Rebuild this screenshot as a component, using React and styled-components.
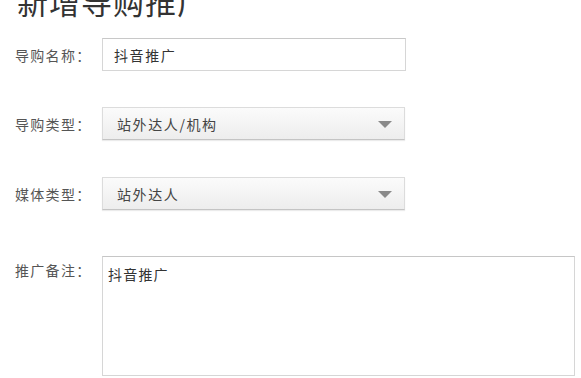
import React from "react";
import styled, { createGlobalStyle } from "styled-components";

const Global = createGlobalStyle`
  html, body { margin: 0; padding: 0; background: #fff; overflow: hidden; }
  body { font-family: "Noto Sans CJK SC", "Noto Sans", sans-serif; }
`;

const Page = styled.div`
  width: 581px;
  height: 378px;
  overflow: hidden;
  padding: 0 0 0 15px;
  box-sizing: border-box;
`;

const Title = styled.h1`
  margin: -14px 0 22px 2px;
  font-size: 31px;
  line-height: 30px;
  font-weight: 400;
  color: #333;
  letter-spacing: 1px;
`;

const Row = styled.div`
  display: flex;
  align-items: ${(p) => (p.$top ? "flex-start" : "center")};
  margin-bottom: ${(p) => p.$mb || 0}px;
`;

const Label = styled.label`
  width: 87px;
  flex: none;
  font-size: 14px;
  letter-spacing: 1.3px;
  color: #555;
  padding-top: ${(p) => (p.$top ? 4 : 0)}px;
`;

const Input = styled.div`
  width: 304px;
  height: 33px;
  box-sizing: border-box;
  border: 1px solid #d6d6d6;
  border-top-color: #c8c8c8;
  background: #fff;
  padding: 0 11px;
  display: flex;
  align-items: center;
  font-size: 14px;
  letter-spacing: 1.6px;
  color: #333;
`;

const Select = styled.div`
  width: 303px;
  height: 33px;
  box-sizing: border-box;
  border: 1px solid #dcdcdc;
  border-bottom-color: #c4c4c4;
  background: linear-gradient(#fbfbfb, #ededed);
  box-shadow: 0 1px 1px rgba(0, 0, 0, 0.08);
  padding: 0 12px 0 14px;
  display: flex;
  align-items: center;
  justify-content: space-between;
  font-size: 14px;
  letter-spacing: 1.6px;
  color: #444;
`;

const Caret = styled.span`
  width: 0;
  height: 0;
  border-left: 7px solid transparent;
  border-right: 7px solid transparent;
  border-top: 7px solid #8a8a8a;
  margin-top: 2px;
`;

const TextArea = styled.div`
  width: 473px;
  height: 120px;
  box-sizing: border-box;
  border: 1px solid #d6d6d6;
  border-top-color: #c6c6c6;
  padding: 5px 5px;
  font-size: 14px;
  letter-spacing: 1.2px;
  line-height: 24px;
  color: #333;
`;

export default function App() {
  return (
    <>
      <Global />
      <Page>
        <Title>新增导购推广</Title>
        <Row $mb={36}>
          <Label>导购名称：</Label>
          <Input>抖音推广</Input>
        </Row>
        <Row $mb={37}>
          <Label>导购类型：</Label>
          <Select>
            <span>站外达人/机构</span>
            <Caret />
          </Select>
        </Row>
        <Row $mb={46}>
          <Label>媒体类型：</Label>
          <Select>
            <span>站外达人</span>
            <Caret />
          </Select>
        </Row>
        <Row $top>
          <Label $top>推广备注：</Label>
          <TextArea>抖音推广</TextArea>
        </Row>
      </Page>
    </>
  );
}
